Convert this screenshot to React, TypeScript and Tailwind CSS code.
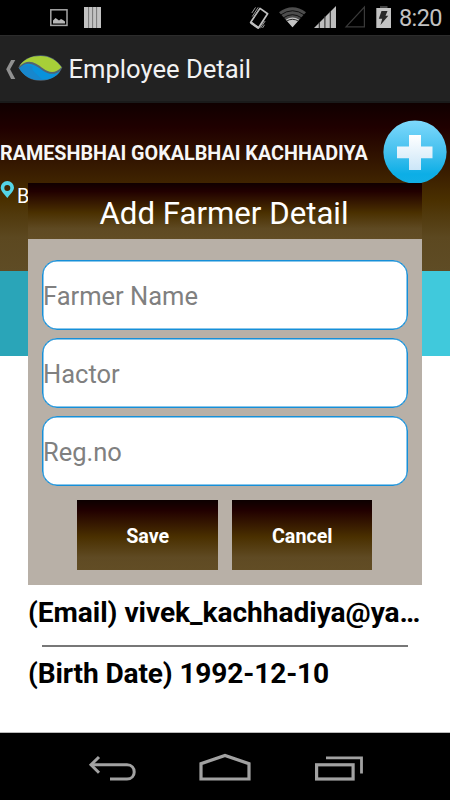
import React from "react";

const StatusBar = () => (
  <div className="flex h-[35px] w-full items-center bg-black">
    <svg className="h-[35px] w-[376px] shrink-0" viewBox="0 0 376 35" fill="none">
      <rect x="50.8" y="9.8" width="16.2" height="15.6" stroke="#a6a6a6" strokeWidth="1.5" />
      <path d="M53 23.5V20.5L55.5 18L57 19L59 20.5L61 19L63 20L65 21.5V23.5Z" fill="#b8b8b8" />
      <path d="M84 7H101V28H84Z" fill="#c2c2c2" />
      <path d="M88.6 7V28M92.6 7V28M96.6 7V28" stroke="#777" strokeWidth="1" />
      <path d="M260 8.4L267.6 13.8L258.4 28L250.6 22.4Z" stroke="#c0c0c0" strokeWidth="1.7" strokeLinejoin="round" />
      <path d="M250.8 22.6L258.2 27.8" stroke="#c0c0c0" strokeWidth="2.4" />
      <path d="M252.3 16.5L258.2 7.3M254.3 17L259 9.5M251.8 13L255.5 7.4M260.5 28.2L265.2 21M259 28L263.5 21.5M262.5 28L264.5 24.8" stroke="#a8a8a8" strokeWidth="0.9" />
      <path d="M279 12.3Q292.5 2.4 306 12.3L292.5 27.3Z" fill="#4d4d4d" />
      <path d="M285.8 19.8Q292.5 15 299.2 19.8L292.5 27.3Z" fill="#c4c4c4" />
      <path d="M280.5 15Q292.5 6.5 304.5 15M283.2 18Q292.5 11.4 301.8 18M286 21.4Q292.5 17.2 299 21.4" stroke="#000" strokeWidth="0.8" />
      <path d="M314 28L336 6V28Z" fill="#bdbdbd" />
      <path d="M319.3 22V28M324.9 16V28M330.3 11V28" stroke="#303030" strokeWidth="1.1" />
      <path d="M346 26.8L364.4 7V26.8Z" stroke="#3a3a3a" strokeWidth="1.2" />
    </svg>
    <svg className="h-[35px] w-[16px] shrink-0" viewBox="376 0 16 35">
      <path d="M380 6H387.5V8.5H380Z" fill="#444" />
      <path d="M376.3 8H391V28H376.3Z" fill="#c3c3c3" />
      <path d="M381.5 11H387.5L385.5 15.8H388.3L380.5 25L382.2 18.8H378.8Z" fill="#292929" />
    </svg>
    <span className="mt-[2px] ml-[7px] text-[23.5px] leading-none tracking-[-0.6px] text-[#c2c2c2]">8:20</span>
  </div>
);

const ActionBar = () => (
  <div className="flex h-[68px] items-center border-t border-b-2 border-t-[#2c2c2c] border-b-[#1a1a1a] bg-[#222]">
    <svg className="h-[40px] w-[68.5px] shrink-0" viewBox="0 49 68.5 40" fill="none">
      <path d="M11.1 60H15.3L10.1 69.3L15.3 79H11.1L6.2 69.3Z" fill="#909090" />
      <path d="M18.4 67.5C23 59 31 55.2 40.7 55.2C50 55.2 57 60 62.3 67.6C59 75.5 51 80.8 40.7 80.8C31 80.8 23.5 76.2 18.4 67.5Z" fill="#516475" />
      <path d="M19.4 66.2C23.5 59 31.3 55.9 40.7 55.9C49.5 55.9 56.5 60 61.5 67.3C56 73.3 49.5 73.4 43.2 68.6C35 62.2 28.3 58.3 19.4 66.2Z" fill="#a7cf38" />
      <path d="M19.4 68.4C27 59.8 35.3 65 42.3 70.2C49 75 55.5 75 60.5 70.5C56.5 77 50 80 40.8 80C31.8 80 24.2 76.3 19.4 68.4Z" fill="#0992dc" />
      <path d="M19.4 68.4C23.5 64.5 28 64.3 33 67.2C30.2 69.3 36 73.5 43 79.9C32.5 80.4 24.3 76.6 19.4 68.4Z" fill="#1787cd" />
    </svg>
    <h1 className="mt-[3px] text-[25.6px] leading-none text-[#f2f2f2]">Employee Detail</h1>
  </div>
);

const AddButton = () => (
  <svg className="h-[64px] w-[64px]" viewBox="0 0 64 64">
    <defs>
      <linearGradient id="disc" x1="0" y1="0" x2="0" y2="1">
        <stop offset="0" stopColor="#7ed9fc" />
        <stop offset="0.5" stopColor="#44c0ee" />
        <stop offset="0.85" stopColor="#0caee6" />
        <stop offset="1" stopColor="#12afe5" />
      </linearGradient>
      <linearGradient id="cross" x1="0" y1="0" x2="0" y2="1">
        <stop offset="0" stopColor="#ffffff" />
        <stop offset="1" stopColor="#cbe6f8" />
      </linearGradient>
    </defs>
    <circle cx="32" cy="32" r="31.6" fill="url(#disc)" />
    <path d="M26 15H38V26.4H49.5V38.3H38V50H26V38.3H14V26.4H26Z" fill="url(#cross)" />
  </svg>
);

const Profile = () => (
  <div className="h-[168px] bg-[linear-gradient(#100000_0%,#200000_15%,#4a3000_58%,#5c4820_80%,#5f4c25_100%)]">
    <div className="flex h-[82px] items-start justify-between pt-[17px] pr-[3px]">
      <span className="mt-[22px] text-[19.75px] leading-[24px] font-bold whitespace-nowrap text-[#f7f7f7]">RAMESHBHAI GOKALBHAI KACHHADIYA</span>
      <AddButton />
    </div>
    <div className="flex h-[20px] items-center">
      <svg className="mb-[11px] h-[19px] w-[17px]" viewBox="0 0 17 19">
        <path fillRule="evenodd" d="M7.3 1A6.6 6.6 0 0 0 .7 7.6C.7 11 4 14 7.3 18C10.5 14 14 11 14 7.6A6.6 6.6 0 0 0 7.3 1ZM7.3 5A3 3 0 1 1 7.3 11A3 3 0 1 1 7.3 5Z" fill="#54d5e6" />
      </svg>
      <span className="mt-[3px] text-[19.7px] leading-none text-white">B</span>
    </div>
  </div>
);

const fields = ["Farmer Name", "Hactor", "Reg.no"];

const FarmerDialog = () => (
  <div className="absolute top-[183px] left-[28px] h-[401.5px] w-[394px] bg-[#b8b0a7]">
    <h2 className="flex h-[56px] items-center justify-center bg-[linear-gradient(#100000_0%,#210000_15%,#4a3000_53%,#5f4a23_82%,#624d25_100%)] pt-[5px] pr-[2px] text-[31.2px] leading-none text-white">Add Farmer Detail</h2>
    <div className="flex flex-col gap-[8px] px-[14px] pt-[21px]">
      {fields.map((name) => (
        <input key={name} placeholder={name} className="h-[70px] w-full rounded-[15px] border-[1.5px] border-[#168fd8] bg-white p-0 pt-[2px] text-[25.5px] text-[#777] shadow-[inset_0_0_0_0.5px_#168fd8] placeholder:text-[#808080] placeholder:opacity-100" />
      ))}
    </div>
    <div className="flex gap-[14px] pt-[14px] pl-[49px]">
      {["Save", "Cancel"].map((name) => (
        <button key={name} className="h-[70px] w-[140.5px] bg-[linear-gradient(#0c0000_0%,#210000_15%,#4a3000_53%,#5f4a23_82%,#624d25_100%)] pt-[3px] pl-[1px] text-[19.7px] font-bold text-white">{name}</button>
      ))}
    </div>
  </div>
);

const NavBar = () => (
  <div className="h-[68px] border-t border-[#bbb] bg-black">
    <svg className="h-[67px] w-[450px]" viewBox="0 733 450 67" fill="none" stroke="#a2a2a2">
      <path d="M91 764.8H127C136.6 764.8 136.6 779 127 779H110" strokeWidth="3" />
      <path d="M99 757L91 764.8L99 772.8" strokeWidth="3" />
      <path d="M201 779V763.7L225 755.5L249 763.7V779Z" strokeWidth="3.2" />
      <rect x="316.6" y="764.8" width="36.5" height="14.2" strokeWidth="3.2" />
      <path d="M326 757.8H361.5V773.5" strokeWidth="2.8" />
    </svg>
  </div>
);

export default function App() {
  return (
    <main className="relative flex h-[800px] w-[450px] flex-col overflow-hidden bg-white font-['Roboto','Liberation_Sans',sans-serif]">
      <StatusBar />
      <ActionBar />
      <Profile />
      <div className="h-[85px] bg-[linear-gradient(90deg,#2aa5b8_50%,#40c9dc_50%)]" />
      <section className="flex grow flex-col px-[28px] pt-[239px] text-[28.1px] leading-[36px] font-bold text-black">
        <p className="tracking-[-0.04px] whitespace-nowrap">(Email) vivek_kachhadiya@ya…</p>
        <div className="mx-[14px] mt-[14px] h-[1.5px] shrink-0 bg-[#777]" />
        <p className="mt-[9px] tracking-[-0.14px]">(Birth Date) 1992-12-10</p>
      </section>
      <NavBar />
      <FarmerDialog />
    </main>
  );
}
